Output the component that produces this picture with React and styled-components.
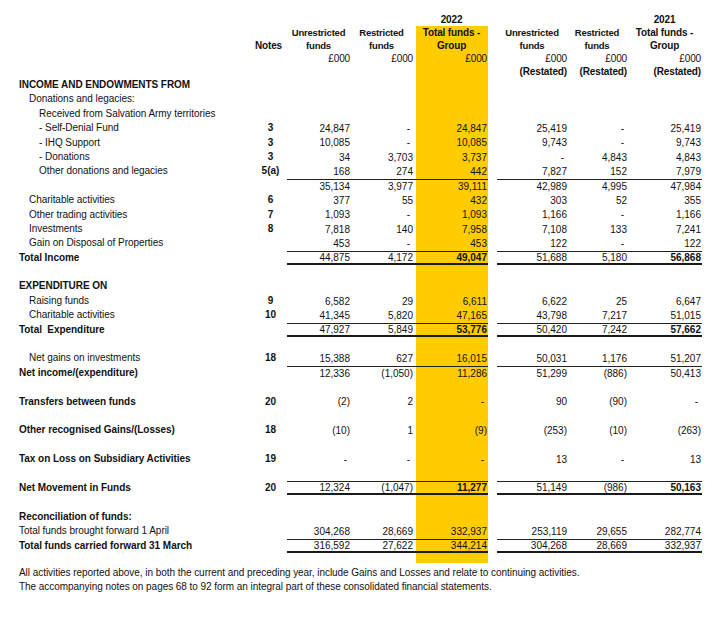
import React from 'react';
import styled, { createGlobalStyle } from 'styled-components';

const GlobalStyle = createGlobalStyle`
  html, body {
    margin: 0;
    padding: 0;
    background: #fff;
  }
  body {
    font-family: 'Liberation Sans', Arial, sans-serif;
    color: #111;
  }
`;

const YELLOW = '#ffcc00';
const COLS = '231px 37px 63px 66px 72px 9px 70px 61px 74px';
// right padding per value column, so the figures line up like the print
const PAD = [0, 3, 1, 0, 1, 1];

const rows = [
  { label: 'INCOME AND ENDOWMENTS FROM', bold: true },
  { label: 'Donations and legacies:', indent: 1 },
  { label: 'Received from Salvation Army territories', indent: 2 },
  { label: '- Self-Denial Fund', indent: 2, note: '3', v: ['24,847', '-', '24,847', '25,419', '-', '25,419'] },
  { label: '- IHQ Support', indent: 2, note: '3', v: ['10,085', '-', '10,085', '9,743', '-', '9,743'] },
  { label: '- Donations', indent: 2, note: '3', v: ['34', '3,703', '3,737', '-', '4,843', '4,843'] },
  { label: 'Other donations and legacies', indent: 2, note: '5(a)', v: ['168', '274', '442', '7,827', '152', '7,979'] },
  { v: ['35,134', '3,977', '39,111', '42,989', '4,995', '47,984'], top: true },
  { label: 'Charitable activities', indent: 1, note: '6', v: ['377', '55', '432', '303', '52', '355'] },
  { label: 'Other trading activities', indent: 1, note: '7', v: ['1,093', '-', '1,093', '1,166', '-', '1,166'] },
  { label: 'Investments', indent: 1, note: '8', v: ['7,818', '140', '7,958', '7,108', '133', '7,241'] },
  { label: 'Gain on Disposal of Properties', indent: 1, v: ['453', '-', '453', '122', '-', '122'] },
  { label: 'Total Income', bold: true, top: true, total: true, v: ['44,875', '4,172', '49,047', '51,688', '5,180', '56,868'] },
  {},
  { label: 'EXPENDITURE ON', bold: true },
  { label: 'Raising funds', indent: 1, note: '9', v: ['6,582', '29', '6,611', '6,622', '25', '6,647'] },
  { label: 'Charitable activities', indent: 1, note: '10', v: ['41,345', '5,820', '47,165', '43,798', '7,217', '51,015'] },
  { label: 'Total  Expenditure', bold: true, top: true, total: true, v: ['47,927', '5,849', '53,776', '50,420', '7,242', '57,662'] },
  {},
  { label: 'Net gains on investments', indent: 1, note: '18', v: ['15,388', '627', '16,015', '50,031', '1,176', '51,207'] },
  { label: 'Net income/(expenditure)', bold: true, top: true, v: ['12,336', '(1,050)', '11,286', '51,299', '(886)', '50,413'] },
  {},
  { label: 'Transfers between funds', bold: true, note: '20', v: ['(2)', '2', '-', '90', '(90)', '-'] },
  {},
  { label: 'Other recognised Gains/(Losses)', bold: true, note: '18', v: ['(10)', '1', '(9)', '(253)', '(10)', '(263)'] },
  {},
  { label: 'Tax on Loss on Subsidiary Activities', bold: true, note: '19', v: ['-', '-', '-', '13', '-', '13'] },
  {},
  { label: 'Net Movement in Funds', bold: true, note: '20', top: true, total: true, v: ['12,324', '(1,047)', '11,277', '51,149', '(986)', '50,163'] },
  {},
  { label: 'Reconciliation of funds:', bold: true },
  { label: 'Total funds brought forward 1 April', v: ['304,268', '28,669', '332,937', '253,119', '29,655', '282,774'] },
  { label: 'Total funds carried forward 31 March', bold: true, top: true, total: true, plain: true, v: ['316,592', '27,622', '344,214', '304,268', '28,669', '332,937'] },
];

function App() {
  return (
    <>
      <GlobalStyle />
      <Sheet>
        <HeadGrid>
          <HeadCol />
          <HeadCol>
            <HL />
            <HL />
            <HL $align='center' $big>Notes</HL>
          </HeadCol>
          <HeadCol>
            <HL />
            <HL $align='center' $small>Unrestricted</HL>
            <HL $align='center' $small>funds</HL>
            <HL $align='right' $plain>£000</HL>
          </HeadCol>
          <HeadCol $pad={PAD[1]}>
            <HL />
            <HL $align='center' $small>Restricted</HL>
            <HL $align='center' $small>funds</HL>
            <HL $align='right' $plain>£000</HL>
          </HeadCol>
          <HeadCol $pad={PAD[2]}>
            <HL $align='center' $big>2022</HL>
            <HL $align='center' $big $fill>Total funds -</HL>
            <HL $align='center' $big $fill>Group</HL>
            <HL $align='right' $plain $fill>£000</HL>
            <HL $fill />
          </HeadCol>
          <HeadCol />
          <HeadCol>
            <HL />
            <HL $align='center' $small>Unrestricted</HL>
            <HL $align='center' $small>funds</HL>
            <HL $align='right' $plain>£000</HL>
            <HL $align='right'>(Restated)</HL>
          </HeadCol>
          <HeadCol $pad={PAD[4]}>
            <HL />
            <HL $align='center' $small>Restricted</HL>
            <HL $align='center' $small>funds</HL>
            <HL $align='right' $plain>£000</HL>
            <HL $align='right'>(Restated)</HL>
          </HeadCol>
          <HeadCol $pad={PAD[5]}>
            <HL $align='center' $big>2021</HL>
            <HL $align='center' $big>Total funds -</HL>
            <HL $align='center' $big>Group</HL>
            <HL $align='right' $plain>£000</HL>
            <HL $align='right'>(Restated)</HL>
          </HeadCol>
        </HeadGrid>

        {rows.map((r, i) => (
          <Row key={i}>
            <Label $indent={r.indent || 0} $bold={r.bold}>{r.label}</Label>
            <Note>{r.note}</Note>
            {[0, 1, 2].map((c) => (
              <Num
                key={c}
                $pad={PAD[c]}
                $yellow={c === 2}
                $top={r.top}
                $total={r.total}
                $strong={r.total && !r.plain && c === 2}
                $dash={r.v && r.v[c] === '-'}
              >
                {r.v ? r.v[c] : ''}
              </Num>
            ))}
            <span />
            {[3, 4, 5].map((c) => (
              <Num
                key={c}
                $pad={PAD[c]}
                $top={r.top}
                $total={r.total}
                $strong={r.total && !r.plain && c === 5}
                $dash={r.v && r.v[c] === '-'}
              >
                {r.v ? r.v[c] : ''}
              </Num>
            ))}
          </Row>
        ))}
        <Tail>
          <span />
          <span />
          <span />
          <span />
          <TailFill />
        </Tail>

        <Notes>
          <p>All activities reported above, in both the current and preceding year, include Gains and Losses and relate to continuing activities.</p>
          <p>The accompanying notes on pages 68 to 92 form an integral part of these consolidated financial statements.</p>
        </Notes>
      </Sheet>
    </>
  );
}

const Sheet = styled.div`
  width: 725px;
  padding: 13px 0 0 19px;
  box-sizing: border-box;
`;

const HeadGrid = styled.div`
  display: grid;
  grid-template-columns: ${COLS};
  align-items: start;
`;

const HeadCol = styled.div`
  display: flex;
  flex-direction: column;
  padding-right: ${(p) => p.$pad || 0}px;
`;

const HL = styled.div`
  height: 13px;
  line-height: 13px;
  white-space: nowrap;
  text-align: ${(p) => p.$align || 'left'};
  font-weight: ${(p) => (p.$plain ? 400 : 700)};
  font-size: ${(p) => (p.$small ? '9.5px' : '10px')};
  letter-spacing: ${(p) => (p.$small ? '-0.2px' : '-0.15px')};
  background: ${(p) => (p.$fill ? YELLOW : 'transparent')};
  margin-right: ${(p) => (p.$fill ? '-1px' : 0)};
  padding-right: ${(p) => (p.$fill ? '1px' : 0)};
`;

const Row = styled.div`
  display: grid;
  grid-template-columns: ${COLS};
  height: 14.4px;
  font-size: 10px;
`;

const Label = styled.div`
  padding-left: ${(p) => p.$indent * 10}px;
  font-weight: ${(p) => (p.$bold ? 700 : 400)};
  line-height: 14.4px;
  white-space: pre;
  letter-spacing: -0.05px;
`;

const Note = styled.div`
  text-align: center;
  font-weight: 700;
  line-height: 14.4px;
  padding-left: 4px;
`;

const Num = styled.div`
  box-sizing: border-box;
  height: 14.4px;
  display: flex;
  align-items: center;
  justify-content: flex-end;
  padding-right: ${(p) => p.$pad + (p.$dash ? 3 : 0)}px;
  background: ${(p) => (p.$yellow ? YELLOW : 'transparent')};
  border-top: ${(p) => (p.$top ? '1px solid #222' : 'none')};
  border-bottom: ${(p) => (p.$total ? '2px solid #1a1a1a' : 'none')};
  font-weight: ${(p) => (p.$strong ? 700 : 400)};
  white-space: nowrap;
`;

const Tail = styled.div`
  display: grid;
  grid-template-columns: ${COLS};
  height: 10px;
`;

const TailFill = styled.div`
  background: ${YELLOW};
`;

const Notes = styled.div`
  margin-top: 3px;
  font-size: 10px;
  line-height: 14px;
  letter-spacing: -0.05px;
  p {
    margin: 0;
    white-space: nowrap;
  }
`;

export default App;
